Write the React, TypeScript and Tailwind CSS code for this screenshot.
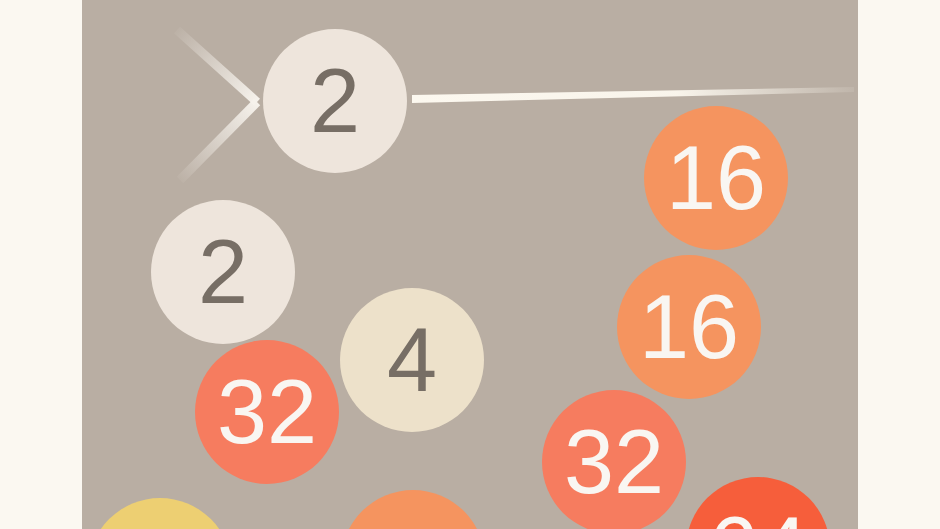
type Ball = {
  value: number;
  left: number;
  top: number;
};

const fills: Record<number, string> = {
  2: 'bg-[#eee5dc] text-[#776e65]',
  4: 'bg-[#ede1ca] text-[#776e65]',
  16: 'bg-[#f5945f] text-[#f9f6f2]',
  32: 'bg-[#f67c5f] text-[#f9f6f2]',
  64: 'bg-[#f65e3b] text-[#f9f6f2]',
  128: 'bg-[#edcf72] text-[#f9f6f2]',
};

// resting balls inside the well
const balls: Ball[] = [
  { value: 16, left: 562, top: 106 },
  { value: 2, left: 69, top: 200 },
  { value: 16, left: 535, top: 255 },
  { value: 4, left: 258, top: 288 },
  { value: 32, left: 113, top: 340 },
  { value: 32, left: 460, top: 390 },
  { value: 64, left: 604, top: 477 },
  { value: 128, left: 6, top: 498 },
  { value: 16, left: 259, top: 490 },
];

function Circle({ value, left, top }: Ball) {
  return (
    <div
      className={`absolute flex h-[144px] w-[144px] items-center justify-center rounded-full text-[90px] leading-none ${fills[value]}`}
      style={{ left, top }}
    >
      {value}
    </div>
  );
}

function Launcher() {
  return (
    <svg className="absolute inset-0" width="776" height="529" viewBox="0 0 776 529">
      <defs>
        <linearGradient id="armTop" gradientUnits="userSpaceOnUse" x1="95" y1="30" x2="175" y2="102">
          <stop offset="0" stopColor="#f6f2ec" stopOpacity="0.05" />
          <stop offset="1" stopColor="#f6f2ec" stopOpacity="1" />
        </linearGradient>
        <linearGradient id="armBottom" gradientUnits="userSpaceOnUse" x1="98" y1="180" x2="175" y2="102">
          <stop offset="0" stopColor="#f6f2ec" stopOpacity="0.05" />
          <stop offset="1" stopColor="#f6f2ec" stopOpacity="1" />
        </linearGradient>
        <linearGradient id="aim" gradientUnits="userSpaceOnUse" x1="330" y1="0" x2="772" y2="0">
          <stop offset="0" stopColor="#fcf8ef" stopOpacity="1" />
          <stop offset="0.6" stopColor="#fcf8ef" stopOpacity="0.95" />
          <stop offset="1" stopColor="#fcf8ef" stopOpacity="0.1" />
        </linearGradient>
      </defs>
      <line x1="95" y1="30" x2="175" y2="102" stroke="url(#armTop)" strokeWidth="9" />
      <line x1="98" y1="180" x2="175" y2="102" stroke="url(#armBottom)" strokeWidth="9" />
      <polygon points="330,95 772,87 772,92 330,103" fill="url(#aim)" />
    </svg>
  );
}

export default function App() {
  return (
    <div className="flex h-[529px] w-full justify-center overflow-hidden bg-[#fbf8f1] font-['Liberation_Sans',Arial,sans-serif]">
      <div className="relative h-[529px] w-[776px] shrink-0 overflow-hidden bg-[#b9aea3]">
        <Launcher />
        <Circle value={2} left={181} top={29} />
        {balls.map((b, i) => (
          <Circle key={i} {...b} />
        ))}
      </div>
    </div>
  );
}
